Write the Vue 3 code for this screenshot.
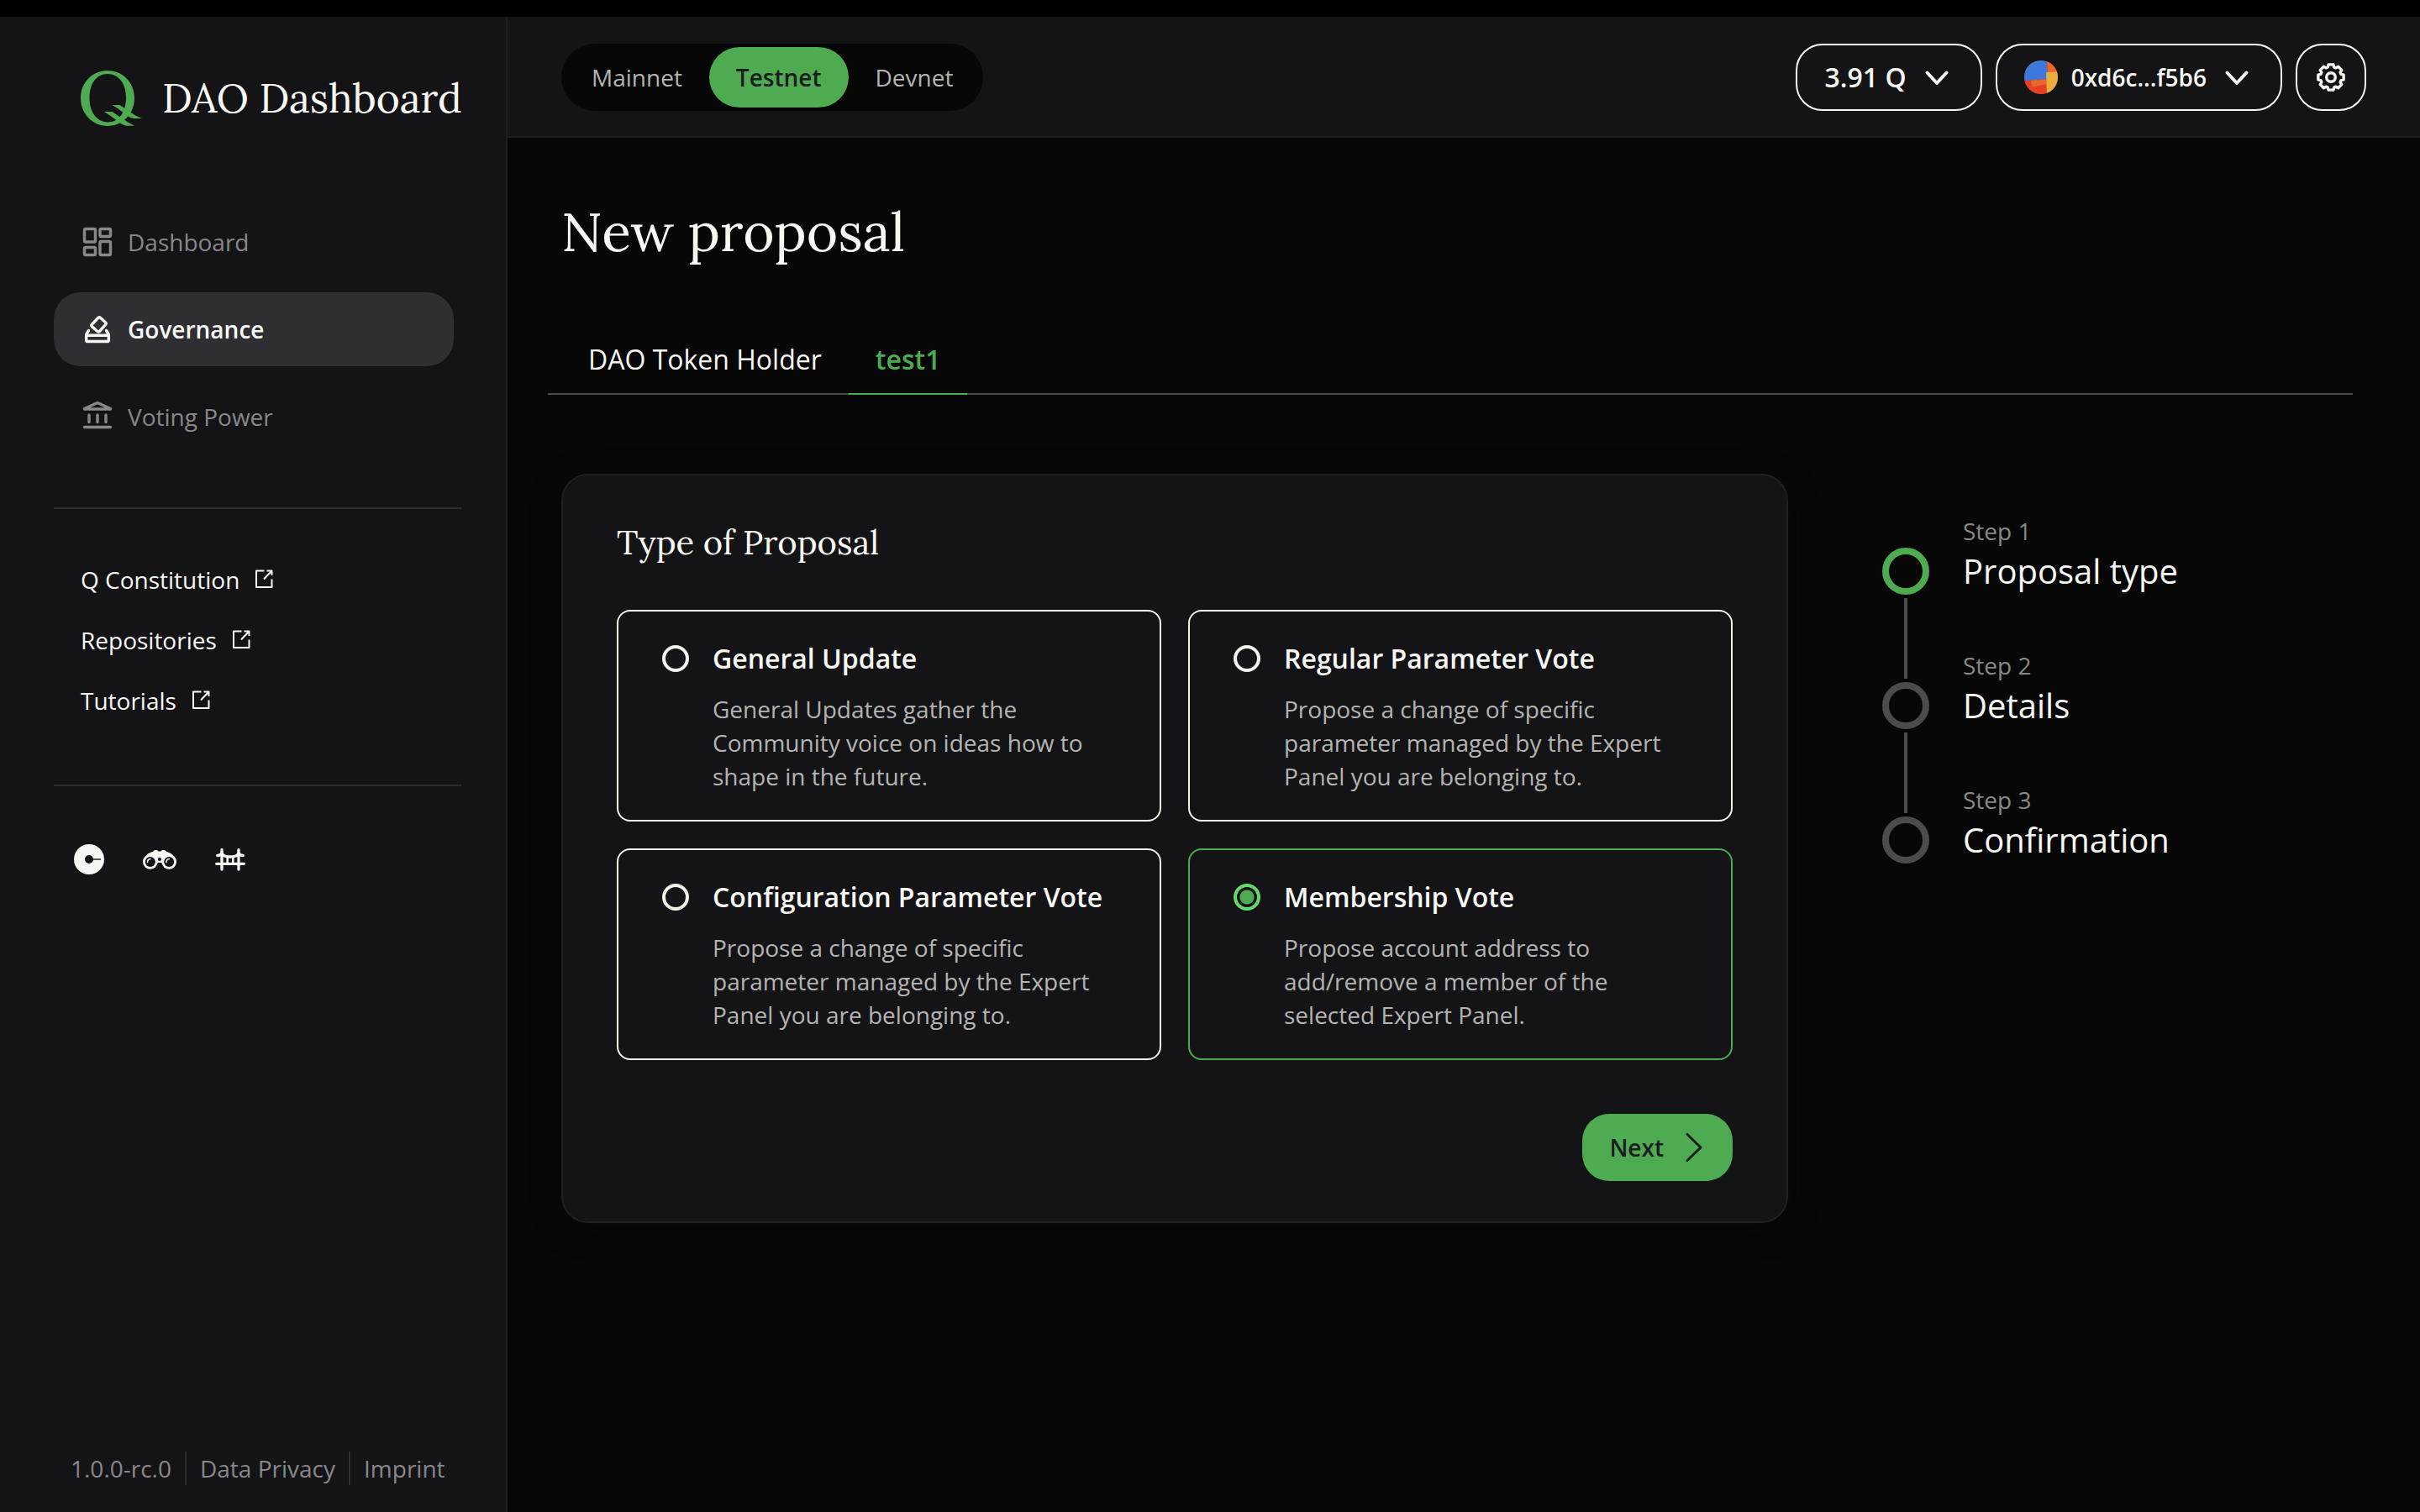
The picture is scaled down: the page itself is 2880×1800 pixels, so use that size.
<template>
  <div class="app">
    <aside class="sidebar">
      <a class="brand" href="#">
        <svg class="brand-logo" viewBox="0 0 73 66" aria-hidden="true">
          <path
            fill="currentColor"
            fill-rule="evenodd"
            d="M32 0C50 0 64 14 64 33C64 51 50 66 32 66C14 66 0 51 0 33C0 14 14 0 32 0ZM32 4C19 4 10.500 15 10.500 33C10.500 50 20 61.500 32.500 61.500C45 61.500 54 50 54 32C54 15 45 4 32 4Z"
          />
          <path fill="currentColor" d="M37.500 41H46.500L66 54L73 57H63.500C60 57 56 54 52 51L44 45Z" />
          <path fill="currentColor" d="M28 49H37.500L57 62L64 65.700H54.500C51 65.500 47 62.500 43 59.500L35 53.500Z" />
        </svg>
        <span class="brand-name">DAO Dashboard</span>
      </a>

      <nav class="nav">
        <a
          v-for="item in navItems"
          :key="item.name"
          href="#"
          class="nav-item"
          :class="{ active: item.name === activeNav }"
          @click.prevent="activeNav = item.name"
        >
          <svg class="icon" viewBox="0 0 40 40" aria-hidden="true">
            <path v-for="d in item.paths" :key="d" :d="d" />
          </svg>
          {{ item.name }}
        </a>
      </nav>

      <ul class="links">
        <li v-for="link in links" :key="link">
          <a href="#">
            {{ link }}
            <svg class="icon-external" viewBox="0 0 24 24" aria-hidden="true">
              <path d="M13.500 1.500H4V21H22.500V11.500" />
              <path d="M16.500 1.500H22.500V7M22.500 1.500L13 11.500" />
            </svg>
          </a>
        </li>
      </ul>

      <div class="socials">
        <a href="#" aria-label="Explorer">
          <svg viewBox="0 0 40 40">
            <circle cx="20" cy="20" r="18" fill="#f7f8f3" />
            <circle cx="20" cy="20" r="5" fill="#141416" />
            <path d="M24 20H34" stroke="#141416" stroke-width="1.400" />
          </svg>
        </a>
        <a href="#" aria-label="Watch">
          <svg viewBox="0 0 40 40">
            <path
              fill="#f7f8f3"
              d="M1 20C3 15 7 12 12 11C13 8.500 17.500 8.500 18.500 10.500H21.500C22.500 8.500 27 8.500 28 11C33 12 37 15 39 20V25H23L22 24H18L17 25H1Z"
            />
            <circle cx="8.800" cy="23" r="8.800" fill="#f7f8f3" />
            <circle cx="31.200" cy="23" r="8.800" fill="#f7f8f3" />
            <circle cx="8.800" cy="23" r="6" fill="#141416" />
            <circle cx="31.200" cy="23" r="6" fill="#141416" />
            <circle cx="20" cy="20" r="2" fill="#141416" />
            <path
              d="M5.500 23.500C5.500 21.500 7 19.800 9 19.500M27.900 23.500C27.900 21.500 29.400 19.800 31.400 19.500"
              fill="none"
              stroke="#f7f8f3"
              stroke-width="1.600"
              stroke-linecap="round"
            />
          </svg>
        </a>
        <a href="#" aria-label="Bridge">
          <svg viewBox="0 0 40 40" fill="none" stroke="#f7f8f3" stroke-width="3.300" stroke-linecap="round">
            <path d="M3.700 25.300H36.300M10 8.500V32M30 8.500V32" />
            <path d="M4.700 15.500C7 15.500 9 14.500 10 12.500C11.500 18.500 28.500 18.500 30 12.500C31 14.500 33 15.500 35.300 15.500" />
            <path d="M16.700 18V25M23.300 18V25" stroke-width="2.600" />
          </svg>
        </a>
      </div>

      <footer class="footer">
        <span>1.0.0-rc.0</span>
        <a href="#">Data Privacy</a>
        <a href="#">Imprint</a>
      </footer>
    </aside>

    <div class="content">
      <header class="header">
        <div class="networks">
          <button
            v-for="item in networks"
            :key="item"
            type="button"
            :class="{ active: item === network }"
            @click="network = item"
          >
            {{ item }}
          </button>
        </div>
        <div class="account">
          <button type="button" class="pill balance">
            3.91 Q
            <svg class="icon chevron" viewBox="0 0 40 40" aria-hidden="true">
              <path d="M8.500 14.500L20 27L31.500 14.500" />
            </svg>
          </button>
          <button type="button" class="pill">
            <svg class="avatar" viewBox="0 0 40 40" aria-hidden="true">
              <rect width="40" height="40" fill="#e84025" />
              <path d="M0 0H27L28 22L0 24Z" fill="#3f78dc" />
              <path d="M27 0H40V14H28Z" fill="#e8692b" />
              <path d="M8 24L26 22.500V28L9.500 31.500Z" fill="#e8692b" />
              <path d="M26 14L40 13.500V40H27Z" fill="#eaae3e" />
            </svg>
            0xd6c...f5b6
            <svg class="icon chevron" viewBox="0 0 40 40" aria-hidden="true">
              <path d="M8.500 14.500L20 27L31.500 14.500" />
            </svg>
          </button>
          <button type="button" class="pill settings" aria-label="Settings">
            <svg class="icon" viewBox="0 0 40 40">
              <path :d="gearPath" />
              <circle cx="20" cy="20" r="5.300" />
            </svg>
          </button>
        </div>
      </header>

      <main class="main">
        <h1>New proposal</h1>

        <div class="tabs" role="tablist">
          <button
            v-for="tab in tabs"
            :key="tab"
            type="button"
            role="tab"
            :aria-selected="tab === activeTab"
            :class="{ active: tab === activeTab }"
            @click="activeTab = tab"
          >
            {{ tab }}
          </button>
        </div>

        <div class="layout">
          <form class="card" @submit.prevent>
            <h2>Type of Proposal</h2>
            <div class="options">
              <label
                v-for="option in options"
                :key="option.title"
                class="option"
                :class="{ selected: option.title === selected }"
              >
                <input v-model="selected" type="radio" name="proposal-type" :value="option.title" />
                <span class="option-text">
                  <span class="option-title">{{ option.title }}</span>
                  <span class="option-desc">{{ option.desc }}</span>
                </span>
              </label>
            </div>
            <button type="submit" class="next">
              Next
              <svg viewBox="0 0 34 40" aria-hidden="true">
                <path d="M12 4.500L28 20L12 35.500" />
              </svg>
            </button>
          </form>

          <ol class="steps">
            <li v-for="(step, i) in steps" :key="step" :class="{ current: i === 0 }">
              <div class="marker">
                <span class="circle"></span>
                <span v-if="i < steps.length - 1" class="line"></span>
              </div>
              <div class="step-text">
                <p class="step-label">Step {{ i + 1 }}</p>
                <p class="step-title">{{ step }}</p>
              </div>
            </li>
          </ol>
        </div>
      </main>
    </div>
  </div>
</template>

<script setup>
import { ref } from 'vue'

const activeNav = ref('Governance')
const network = ref('Testnet')
const activeTab = ref('test1')
const selected = ref('Membership Vote')

const networks = ['Mainnet', 'Testnet', 'Devnet']
const tabs = ['DAO Token Holder', 'test1']
const links = ['Q Constitution', 'Repositories', 'Tutorials']
const steps = ['Proposal type', 'Details', 'Confirmation']

const navItems = [
  {
    name: 'Dashboard',
    paths: [
      'M6 4.500h10a1.500 1.500 0 0 1 1.500 1.500v12.500a1.500 1.500 0 0 1-1.500 1.500h-10a1.500 1.500 0 0 1-1.500-1.500v-12.500a1.500 1.500 0 0 1 1.500-1.500z',
      'M24.500 4.500h9.500a1.500 1.500 0 0 1 1.500 1.500v6a1.500 1.500 0 0 1-1.500 1.500h-9.500a1.500 1.500 0 0 1-1.500-1.500v-6a1.500 1.500 0 0 1 1.500-1.500z',
      'M6 26.500h10a1.500 1.500 0 0 1 1.500 1.500v6a1.500 1.500 0 0 1-1.500 1.500h-10a1.500 1.500 0 0 1-1.500-1.500v-6a1.500 1.500 0 0 1 1.500-1.500z',
      'M24.500 19.500h9.500a1.500 1.500 0 0 1 1.500 1.500v13a1.500 1.500 0 0 1-1.500 1.500h-9.500a1.500 1.500 0 0 1-1.500-1.500v-13a1.500 1.500 0 0 1 1.500-1.500z'
    ]
  },
  {
    name: 'Governance',
    paths: [
      'M21 6.200Q22.200 5 23.400 6.200L29.700 12Q30.800 13.200 29.700 14.400L22.400 22.500Q21.200 23.600 20 22.500L13.300 16.600Q12.200 15.400 13.300 14.200Z',
      'M9.500 21.500L6.700 26V33Q6.700 34.500 8.200 34.500H31.800Q33.300 34.500 33.300 33V26L30.500 21.500',
      'M7 27.300H33'
    ]
  },
  {
    name: 'Voting Power',
    paths: [
      'M20 3.500L35.500 10.500V11H4.500V10.500Z',
      'M10 18V26.500M20 18V26.500M30 18V26.500',
      'M4.500 32.500H35.500'
    ]
  }
]

const options = [
  {
    title: 'General Update',
    desc: 'General Updates gather the Community voice on ideas how to shape in the future.'
  },
  {
    title: 'Regular Parameter Vote',
    desc: 'Propose a change of specific parameter managed by the Expert Panel you are belonging to.'
  },
  {
    title: 'Configuration Parameter Vote',
    desc: 'Propose a change of specific parameter managed by the Expert Panel you are belonging to.'
  },
  {
    title: 'Membership Vote',
    desc: 'Propose account address to add/remove a member of the selected Expert Panel.'
  }
]

// eight rounded teeth around the centre of a 40x40 box
function buildGear() {
  const points = []
  for (let i = 0; i < 8; i++) {
    for (const [offset, radius] of [[-11, 15.4], [11, 15.4], [17, 12.6], [28, 12.6]]) {
      const angle = ((i * 45 + offset) * Math.PI) / 180
      points.push(`${(20 + radius * Math.cos(angle)).toFixed(2)} ${(20 + radius * Math.sin(angle)).toFixed(2)}`)
    }
  }
  return `M${points.join('L')}Z`
}

const gearPath = buildGear()
</script>

<style>
body {
  background: #000;
}
</style>

<style scoped>
.app {
  display: flex;
  box-sizing: border-box;
  min-height: 100vh;
  border-top: 20px solid #000;
  background: #070707;
  color: #f7f8f3;
  font-family: 'Open Sans', 'Noto Sans', sans-serif;
  font-size: 28px;
  line-height: 40px;
}

a {
  color: inherit;
  text-decoration: none;
}

button {
  border: none;
  background: none;
  color: inherit;
  font: inherit;
  cursor: pointer;
}

h1,
h2,
p,
ul,
ol {
  margin: 0;
  padding: 0;
}

ul,
ol {
  list-style: none;
}

h1,
h2,
.brand-name {
  font-family: Lora, 'Liberation Serif', serif;
  font-weight: 400;
}

.icon {
  flex: none;
  width: 40px;
  height: 40px;
  fill: none;
  stroke: currentColor;
  stroke-width: 3.4;
  stroke-linecap: round;
  stroke-linejoin: round;
}

/* sidebar */
.sidebar {
  display: flex;
  flex: none;
  flex-direction: column;
  box-sizing: border-box;
  width: 604px;
  padding: 64px 53px 32px 64px;
  border-right: 2px solid #1f1f21;
  background: #141416;
}

.brand {
  display: flex;
  align-items: center;
  gap: 24px;
  margin-bottom: 94px;
  padding-left: 32px;
}

.brand-logo {
  flex: none;
  width: 73px;
  height: 66px;
  color: #4fab52;
}

.brand-name {
  font-size: 48px;
  line-height: 64px;
  white-space: nowrap;
}

.nav {
  display: flex;
  flex-direction: column;
  gap: 16px;
  width: 476px;
}

.nav-item {
  display: flex;
  align-items: center;
  gap: 16px;
  height: 88px;
  padding: 0 32px;
  box-sizing: border-box;
  border-radius: 32px;
  color: #888889;
}

.nav-item.active {
  background: #2f2e33;
  color: #f7f8f3;
  font-weight: 600;
}

.links {
  display: flex;
  flex-direction: column;
  gap: 32px;
  margin-top: 64px;
  padding: 64px 0 80px 32px;
  border-top: 2px solid #2d2d2f;
  border-bottom: 2px solid #2d2d2f;
}

.links a {
  display: flex;
  align-items: center;
  gap: 16px;
}

.icon-external {
  width: 24px;
  height: 24px;
  fill: none;
  stroke: currentColor;
  stroke-width: 2;
  stroke-linejoin: round;
}

.socials {
  display: flex;
  gap: 44px;
  margin-top: 67px;
  padding-left: 22px;
}

.socials a,
.socials svg {
  display: block;
  width: 40px;
  height: 40px;
}

.footer {
  display: flex;
  margin-top: auto;
  padding-left: 4px;
  color: #888889;
}

.footer > * {
  padding: 0 16px;
}

.footer > * + * {
  border-left: 2px solid #2d2d2f;
}

/* header */
.content {
  flex: 1;
  min-width: 0;
}

.header {
  display: flex;
  align-items: center;
  justify-content: space-between;
  padding: 32px 64px 30px;
  border-bottom: 2px solid #1f1f21;
  background: #141416;
}

.networks {
  display: flex;
  padding: 4px;
  border-radius: 40px;
  background: #070707;
}

.networks button {
  height: 72px;
  padding: 0 32px;
  border-radius: 36px;
  color: #b4b4b2;
}

.networks .active {
  background: #4fab52;
  color: #1b1c1f;
  font-weight: 600;
}

.account {
  display: flex;
  gap: 16px;
}

.pill {
  display: flex;
  align-items: center;
  gap: 16px;
  box-sizing: border-box;
  height: 80px;
  padding: 0 32px;
  border: 2px solid #f7f8f3;
  border-radius: 32px;
  font-weight: 600;
}

.balance {
  font-size: 32px;
}

.settings {
  padding: 0 20px;
}

.chevron {
  stroke-width: 4;
}

.avatar {
  width: 40px;
  height: 40px;
  border-radius: 50%;
}

/* page */
.main {
  padding: 72px 64px;
}

h1 {
  font-size: 64px;
  line-height: 80px;
}

.tabs {
  display: flex;
  margin: 88px 16px 0 -16px;
  padding: 0 16px;
  border-bottom: 2px solid #4b4b4d;
}

.tabs button {
  margin-bottom: -2px;
  padding: 0 32px 16px;
  border-bottom: 2px solid transparent;
  font-size: 32px;
  line-height: 48px;
}

.tabs .active {
  border-color: #4fab52;
  color: #4fab52;
  font-weight: 600;
}

.layout {
  display: grid;
  grid-template-columns: minmax(0, 1fr) 576px;
  align-items: start;
  gap: 112px;
  margin-top: 94px;
}

.card {
  display: flex;
  flex-direction: column;
  padding: 48px 64px;
  border: 2px solid #1f1f21;
  border-radius: 32px;
  background: #141416;
  box-shadow: 0 8px 32px rgba(6, 9, 14, 0.6);
}

h2 {
  margin-bottom: 48px;
  font-size: 40px;
  line-height: 64px;
}

.options {
  display: grid;
  grid-template-columns: repeat(2, minmax(0, 1fr));
  gap: 32px;
}

.option {
  display: flex;
  align-items: flex-start;
  gap: 28px;
  padding: 32px 52px;
  border: 2px solid #f0f1e8;
  border-radius: 16px;
  cursor: pointer;
}

.option.selected {
  border-color: #4fab52;
}

.option input {
  flex: none;
  width: 32px;
  height: 32px;
  margin: 8px 0 0;
  border: 4px solid #f0f1e8;
  border-radius: 50%;
  appearance: none;
}

.option input:checked {
  border-color: #62db6a;
  background: radial-gradient(circle, #4fab52 8px, transparent 9px);
}

.option-text {
  display: flex;
  flex-direction: column;
  gap: 16px;
}

.option-title {
  font-size: 32px;
  font-weight: 600;
  line-height: 48px;
}

.option-desc {
  color: #b4b4b2;
}

.next {
  display: flex;
  align-items: center;
  align-self: flex-end;
  gap: 16px;
  height: 80px;
  margin-top: 64px;
  padding: 0 32px;
  border-radius: 32px;
  background: #4fab52;
  color: #1b1c1f;
  font-weight: 600;
}

.next svg {
  width: 34px;
  height: 40px;
  fill: none;
  stroke: currentColor;
  stroke-width: 3;
  stroke-linecap: round;
  stroke-linejoin: round;
}

/* stepper */
.steps {
  padding-top: 48px;
}

.steps li {
  display: flex;
  gap: 40px;
  min-height: 160px;
}

/* the connector reaches down to the next circle, past its own row */
.marker {
  display: flex;
  flex-direction: column;
  align-items: center;
  gap: 4px;
  margin: 40px 0 -36px;
}

.circle {
  box-sizing: border-box;
  width: 56px;
  height: 56px;
  border: 8px solid #4b4b4d;
  border-radius: 50%;
}

.current .circle {
  border-color: #4fab52;
}

.line {
  flex: 1;
  width: 4px;
  background: #4b4b4d;
}

.step-label {
  color: #888889;
}

.step-title {
  font-size: 40px;
  line-height: 56px;
}
</style>
